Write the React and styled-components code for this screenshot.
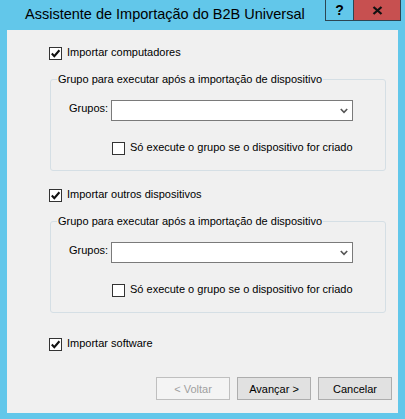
import React from 'react';
import styled, { createGlobalStyle } from 'styled-components';

const GlobalStyle = createGlobalStyle`
  html, body {
    margin: 0;
    padding: 0;
    background: #62c7ea;
  }
  body {
    font-family: "Liberation Sans", Arial, sans-serif;
    font-size: 11px;
    color: #000;
  }
`;

const Window = styled.div`
  width: 405px;
  height: 419px;
  display: flex;
  flex-direction: column;
  background: #62c7ea;
  box-sizing: border-box;
  padding-bottom: 6px;
`;

const TitleBar = styled.div`
  display: flex;
  align-items: flex-start;
  height: 30px;
  flex-shrink: 0;
`;

const Title = styled.div`
  flex: 1;
  padding: 4px 0 0 25px;
  font-size: 14.5px;
  line-height: 20px;
  white-space: nowrap;
`;

const TitleButtons = styled.div`
  display: flex;
  margin-right: 4px;
  border: 1px solid #2c4653;
  border-top: none;
  height: 20px;
`;

const CaptionButton = styled.div`
  display: flex;
  align-items: center;
  justify-content: center;
  width: ${({ wide }) => (wide ? '46px' : '27px')};
  background: ${({ danger }) => (danger ? '#c75050' : '#62c7ea')};
  border-left: ${({ danger }) => (danger ? '1px solid #2c4653' : 'none')};
  font-weight: bold;
  font-size: 14px;
  line-height: 20px;
`;

const Client = styled.div`
  flex: 1;
  margin: 0 7px;
  background: #f0f0f0;
  display: flex;
  flex-direction: column;
  padding: 17px 6px 13px 42px;
`;

const CheckRow = styled.label`
  display: flex;
  align-items: center;
  gap: 5px;
  margin-top: ${({ mt }) => mt || 0}px;
  margin-left: ${({ ml }) => ml || 0}px;
  height: 13px;
  line-height: 13px;
  white-space: nowrap;
`;

const Box = styled.span`
  display: flex;
  align-items: center;
  justify-content: center;
  width: 13px;
  height: 13px;
  box-sizing: border-box;
  border: 1px solid #333;
  background: #fff;
  flex-shrink: 0;
`;

const LabelText = styled.span`
  position: relative;
  top: -1px;
`;

const GroupBox = styled.div`
  position: relative;
  margin-top: ${({ mt }) => mt}px;
  margin-left: 1px;
  width: 336px;
  height: 92px;
  box-sizing: border-box;
  border: 1px solid #d5dfe5;
  border-radius: 3px;
  padding: 20px 0 0 18px;
`;

const Legend = styled.span`
  position: absolute;
  top: -7px;
  left: 6px;
  padding: 0 1px;
  line-height: 13px;
  background: #f0f0f0;
  white-space: nowrap;
`;

const FieldRow = styled.div`
  display: flex;
  align-items: center;
  gap: 3px;
`;

const FieldLabel = styled.span`
  position: relative;
  top: -3px;
`;

const Combo = styled.div`
  width: 242px;
  height: 21px;
  box-sizing: border-box;
  border: 1px solid #7a7a7a;
  background: #fff;
  display: flex;
  align-items: center;
  justify-content: flex-end;
  padding-right: 4px;
`;

const ButtonRow = styled.div`
  margin-top: auto;
  display: flex;
  justify-content: flex-end;
  gap: 7px;
`;

const Button = styled.div`
  width: 74px;
  height: 23px;
  box-sizing: border-box;
  display: flex;
  align-items: center;
  justify-content: center;
  border: 1px solid ${({ disabled }) => (disabled ? '#bfbfbf' : '#adadad')};
  background: ${({ disabled }) => (disabled ? '#f4f4f4' : '#e1e1e1')};
  color: ${({ disabled }) => (disabled ? '#a0a0a0' : '#000')};
`;

const Check = ({ checked }) => (
  <Box>
    {checked && (
      <svg width='11' height='11' viewBox='0 0 11 11'>
        <path d='M1.8 5.6 L4.3 8.2 L9.4 2.2' fill='none' stroke='#111' strokeWidth='2.1' />
      </svg>
    )}
  </Box>
);

const Chevron = () => (
  <svg width='8' height='6' viewBox='0 0 8 6'>
    <path d='M0.8 1 L4 4.4 L7.2 1' fill='none' stroke='#555' strokeWidth='1.6' />
  </svg>
);

const DeviceGroup = ({ mt }) => (
  <GroupBox mt={mt}>
    <Legend>Grupo para executar após a importação de dispositivo</Legend>
    <FieldRow>
      <FieldLabel>Grupos:</FieldLabel>
      <Combo>
        <Chevron />
      </Combo>
    </FieldRow>
    <CheckRow mt={21} ml={43}>
      <Check />
      <LabelText>Só execute o grupo se o dispositivo for criado</LabelText>
    </CheckRow>
  </GroupBox>
);

const App = () => (
  <Window>
    <GlobalStyle />
    <TitleBar>
      <Title>Assistente de Importação do B2B Universal</Title>
      <TitleButtons>
        <CaptionButton>?</CaptionButton>
        <CaptionButton wide danger>
          <svg width='11' height='9' viewBox='0 0 11 9'>
            <path d='M1.5 1 L9.5 8 M9.5 1 L1.5 8' stroke='#111' strokeWidth='2.3' />
          </svg>
        </CaptionButton>
      </TitleButtons>
    </TitleBar>
    <Client>
      <CheckRow>
        <Check checked />
        <LabelText>Importar computadores</LabelText>
      </CheckRow>
      <DeviceGroup mt={19} />
      <CheckRow mt={18}>
        <Check checked />
        <LabelText>Importar outros dispositivos</LabelText>
      </CheckRow>
      <DeviceGroup mt={19} />
      <CheckRow mt={25}>
        <Check checked />
        <LabelText>Importar software</LabelText>
      </CheckRow>
      <ButtonRow>
        <Button disabled>&lt; Voltar</Button>
        <Button>Avançar &gt;</Button>
        <Button>Cancelar</Button>
      </ButtonRow>
    </Client>
  </Window>
);

export default App;
